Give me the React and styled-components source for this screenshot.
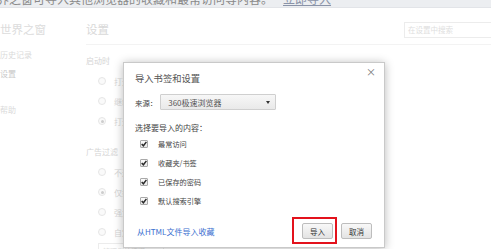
import React from 'react';
import styled, { createGlobalStyle } from 'styled-components';

const GlobalStyle = createGlobalStyle`
   html, body {
      margin: 0;
      padding: 0;
      background: #fff;
      overflow: hidden;
   }
   body {
      font-family: "Noto Sans CJK SC", "Noto Sans", sans-serif;
   }
`;

const Page = styled.div`
   position: relative;
   width: 491px;
   height: 249px;
   overflow: hidden;
   background: #fff;
`;

const TopBar = styled.div`
   height: 7px;
   overflow: hidden;
   background: #eceef1;
   border-bottom: 1px solid #e2e4e8;
   .inner {
      margin: -8px 0 0 -3px;
      font-size: 12px;
      line-height: 14px;
      color: #8a8a8a;
      white-space: nowrap;
   }
   .link {
      margin-left: 10px;
      color: #8a93a8;
      text-decoration: underline;
   }
`;

const Main = styled.div`
   display: flex;
`;

const Sidebar = styled.div`
   width: 86px;
   flex-shrink: 0;
   padding-top: 14px;
`;

const Brand = styled.div`
   font-size: 11.5px;
   line-height: 14px;
   color: #dcdcdc;
   white-space: nowrap;
`;

const NavItem = styled.div`
   margin-top: ${(props) => props.$gap}px;
   font-size: 8px;
   line-height: 12px;
   color: ${(props) => (props.$active ? '#c8c8c8' : '#dadada')};
`;

const Content = styled.div`
   flex: 1;
   min-width: 0;
`;

const Header = styled.div`
   display: flex;
   align-items: flex-start;
   justify-content: space-between;
   padding: 14px 0 6px;
   border-bottom: 1px solid #f3f3f3;
   .title {
      font-size: 11.5px;
      line-height: 14px;
      color: #d8d8d8;
   }
`;

const Search = styled.div`
   width: 83px;
   height: 14px;
   border: 1px solid #ececec;
   border-right: none;
   font-size: 7.5px;
   line-height: 14px;
   padding-left: 3px;
   color: #dedede;
   box-sizing: content-box;
`;

const SectionTitle = styled.div`
   margin-top: ${(props) => props.$gap}px;
   font-size: 8px;
   line-height: 12px;
   color: #d4d4d4;
`;

const RadioList = styled.div`
   margin-top: 4px;
   padding-left: 12px;
`;

const RadioRow = styled.div`
   display: flex;
   align-items: center;
   gap: 8px;
   height: 20px;
   font-size: 8px;
   color: #d6d6d6;
   white-space: nowrap;
`;

const Radio = styled.span`
   width: 8px;
   height: 8px;
   border-radius: 50%;
   border: 1px solid #e6e6e6;
   box-sizing: border-box;
   background: #fafafa;
   display: flex;
   align-items: center;
   justify-content: center;
   &::after {
      content: '';
      width: 3px;
      height: 3px;
      border-radius: 50%;
      background: ${(props) => (props.$checked ? '#cdcdcd' : 'transparent')};
   }
`;

const GhostButton = styled.div`
   margin: 1px 0 0 12px;
   width: 60px;
   height: 14px;
   border: 1px solid #ececec;
   font-size: 7px;
   line-height: 14px;
   padding-left: 4px;
   color: #dcdcdc;
`;

const Dialog = styled.div`
   position: absolute;
   left: 123px;
   top: 62px;
   width: 262px;
   height: 186px;
   box-sizing: border-box;
   padding: 0 12px 0 11px;
   background: #fff;
   border: 1px solid #c9c9c9;
   box-shadow: 0 1px 9px rgba(0, 0, 0, 0.28);
   display: flex;
   flex-direction: column;
   color: #333;
`;

const TitleRow = styled.div`
   position: relative;
   height: 29px;
   display: flex;
   align-items: center;
   font-size: 9.3px;
   color: #555;
`;

const Close = styled.span`
   position: absolute;
   right: -4px;
   top: 3px;
   font-size: 10px;
   line-height: 12px;
   color: #777;
`;

const SourceRow = styled.div`
   margin-top: 2px;
   display: flex;
   align-items: center;
   gap: 3px;
   height: 16px;
   font-size: 7.4px;
   color: #444;
`;

const Select = styled.div`
   width: 116px;
   height: 16px;
   box-sizing: border-box;
   border: 1px solid #cfcfcf;
   border-radius: 1px;
   background: linear-gradient(#f7f7f7, #e9e9e9);
   display: flex;
   align-items: center;
   justify-content: space-between;
   padding: 0 5px 0 7px;
   font-size: 8px;
   color: #555;
   &::after {
      content: '';
      border-left: 2.5px solid transparent;
      border-right: 2.5px solid transparent;
      border-top: 3px solid #333;
   }
`;

const Label = styled.div`
   margin-top: 12px;
   font-size: 8px;
   line-height: 12px;
   color: #444;
`;

const CheckRow = styled.label`
   display: flex;
   align-items: center;
   gap: 10px;
   height: 19px;
   padding-left: 5px;
   font-size: 7.2px;
   color: #444;
`;

const CheckBox = styled.span`
   width: 8px;
   height: 8px;
   box-sizing: border-box;
   border: 1px solid #a9a9a9;
   border-radius: 1px;
   background: linear-gradient(#fdfdfd, #e8e8e8);
   display: flex;
   align-items: center;
   justify-content: center;
   svg {
      display: block;
   }
`;

const Footer = styled.div`
   margin-top: 13px;
   display: flex;
   align-items: center;
   height: 16px;
`;

const Link = styled.a`
   margin-left: 2px;
   font-size: 8px;
   color: #3b6fcf;
   text-decoration: none;
`;

const Buttons = styled.div`
   margin-left: auto;
   display: flex;
   gap: 8px;
`;

const Highlight = styled.div`
   position: relative;
   &::before {
      content: '';
      position: absolute;
      left: -10px;
      right: -4px;
      top: -6px;
      bottom: -5px;
      border: 2px solid #e3121c;
      pointer-events: none;
   }
`;

const Button = styled.div`
   width: 31px;
   height: 16px;
   box-sizing: border-box;
   border: 1px solid #bdbdbd;
   border-radius: 2px;
   background: linear-gradient(#f8f8f8, #e3e3e3);
   display: flex;
   align-items: center;
   justify-content: center;
   font-size: 7.5px;
   color: #333;
`;

const Check = () => (
   <CheckBox>
      <svg width="6" height="6" viewBox="0 0 6 6">
         <path d="M0.7 3 L2.4 4.8 L5.4 0.9" fill="none" stroke="#2a2a2a" strokeWidth="1.5" />
      </svg>
   </CheckBox>
);

const startup = ['打开新标签页', '继续浏览上次打开的网页', '打开特定网页或一组网页'];
const adblock = ['不过滤广告', '仅拦截弹出窗口', '强力拦截广告', '自定义过滤规则'];
const items = ['最常访问', '收藏夹/书签', '已保存的密码', '默认搜索引擎'];

const App = () => {
   return (
      <Page>
         <GlobalStyle />
         <TopBar>
            <div className="inner">
               界之窗可导入其他浏览器的收藏和最常访问等内容。
               <span className="link">立即导入</span>
            </div>
         </TopBar>
         <Main>
            <Sidebar>
               <Brand>世界之窗</Brand>
               <NavItem $gap={13}>历史记录</NavItem>
               <NavItem $gap={7} $active>
                  设置
               </NavItem>
               <NavItem $gap={24}>帮助</NavItem>
            </Sidebar>
            <Content>
               <Header>
                  <span className="title">设置</span>
                  <Search>在设置中搜索</Search>
               </Header>
               <SectionTitle $gap={10}>启动时</SectionTitle>
               <RadioList>
                  {startup.map((t, i) => (
                     <RadioRow key={t}>
                        <Radio $checked={i === 2} />
                        {t}
                     </RadioRow>
                  ))}
               </RadioList>
               <SectionTitle $gap={15}>广告过滤</SectionTitle>
               <RadioList>
                  {adblock.map((t, i) => (
                     <RadioRow key={t}>
                        <Radio $checked={i === 1} />
                        {t}
                     </RadioRow>
                  ))}
               </RadioList>
               <GhostButton>管理例外情况</GhostButton>
            </Content>
         </Main>

         <Dialog>
            <TitleRow>
               导入书签和设置
               <Close>×</Close>
            </TitleRow>
            <SourceRow>
               来源：
               <Select>360极速浏览器</Select>
            </SourceRow>
            <Label>选择要导入的内容：</Label>
            <div>
               {items.map((t) => (
                  <CheckRow key={t}>
                     <Check />
                     {t}
                  </CheckRow>
               ))}
            </div>
            <Footer>
               <Link href="#">从HTML文件导入收藏</Link>
               <Buttons>
                  <Highlight>
                     <Button>导入</Button>
                  </Highlight>
                  <Button>取消</Button>
               </Buttons>
            </Footer>
         </Dialog>
      </Page>
   );
};

export default App;
